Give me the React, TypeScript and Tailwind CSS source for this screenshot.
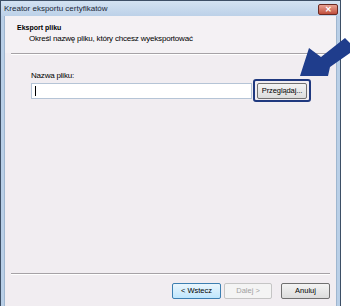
import React from "react";

export default function App() {
  const font = { fontFamily: '"Liberation Sans", Arial, sans-serif' };
  return (
    <div className="w-[350px] h-[306px] bg-white flex relative overflow-hidden" style={font}>
      <div className="w-[341px] h-[306px] flex flex-col border-l border-t border-r border-[#3d4f66] bg-[#b9cfe7]">
        {/* title bar */}
        <div className="h-[15px] flex items-center justify-between bg-gradient-to-b from-[#d3e2f2] to-[#bcd1e8] pl-[3px] pr-[2px]">
          <span className="text-[8px] leading-none text-[#1b2838] mt-[1px]">Kreator eksportu certyfikatów</span>
          <div className="w-[20px] h-[11px] mt-[2px] rounded-[2px] border border-[#6b2a22] bg-gradient-to-b from-[#e8a293] to-[#c04d3c] flex items-center justify-center text-white text-[8px] leading-none font-bold">
            ✕
          </div>
        </div>
        {/* body */}
        <div className="flex-1 flex flex-col mx-[3px] bg-[#f1edf1] border-l border-r border-[#9fb6cf]">
          {/* header */}
          <div className="h-[37px] flex flex-col pl-[12px] pt-[7px] bg-[#f4f1f4]">
            <span className="text-[7px] leading-[9px] font-bold text-black">Eksport pliku</span>
            <span className="text-[8px] leading-[10px] text-black pl-[12px] mt-[2px] tracking-[-0.2px]">Określ nazwę pliku, który chcesz wyeksportować</span>
          </div>
          <div className="mx-[6px] h-[2px] border-t border-[#a6a2a6] border-b border-b-white" />
          {/* main */}
          <div className="flex-1 flex flex-col pl-[26px]">
            <span className="mt-[16px] text-[8px] leading-[10px] text-black tracking-[-0.2px]">Nazwa pliku:</span>
            <div className="flex items-center mt-[-2px]">
              <div className="w-[221px] h-[16px] bg-white border border-[#b5c4d6] flex items-center pl-[3px]">
                <div className="w-px h-[10px] bg-black" />
              </div>
              <div className="ml-[1px] w-[58px] h-[23px] rounded-[3px] border-2 border-[#20397f] flex items-center justify-center">
                <div className="w-[50px] h-[16px] rounded-[2px] border border-[#707070] bg-gradient-to-b from-[#f4f4f4] to-[#dcdcdc] flex items-center justify-center text-[7.5px] text-black leading-none tracking-[-0.1px]">
                  Przeglądaj...
                </div>
              </div>
            </div>
          </div>
          {/* bottom */}
          <div className="mx-[6px] h-[2px] border-t border-[#a6a2a6] border-b border-b-white" />
          <div className="h-[31px] flex items-start justify-end pr-[6px] pt-[8px] gap-[3px]">
            <div className="w-[49px] h-[16px] rounded-[2px] border border-[#3c7fb1] bg-gradient-to-b from-[#eaf6fd] to-[#bee6fd] flex items-center justify-center text-[7.5px] text-black leading-none">
              &lt; Wstecz
            </div>
            <div className="w-[48px] h-[16px] rounded-[2px] border border-[#c5c5c5] bg-[#f4f4f4] flex items-center justify-center text-[7.5px] text-[#a0a0a0] leading-none">
              Dalej &gt;
            </div>
            <div className="ml-[6px] w-[49px] h-[16px] rounded-[2px] border border-[#707070] bg-gradient-to-b from-[#f4f4f4] to-[#dcdcdc] flex items-center justify-center text-[7.5px] text-black leading-none">
              Anuluj
            </div>
          </div>
        </div>
      </div>
      {/* callout arrow */}
      <svg className="absolute left-0 top-0" width="350" height="306" viewBox="0 0 350 306">
        <polygon points="300,76 309,48 321,57 345,38 350,43 350,53 330,67 328,76" fill="#1f3d8c" />
      </svg>
    </div>
  );
}
